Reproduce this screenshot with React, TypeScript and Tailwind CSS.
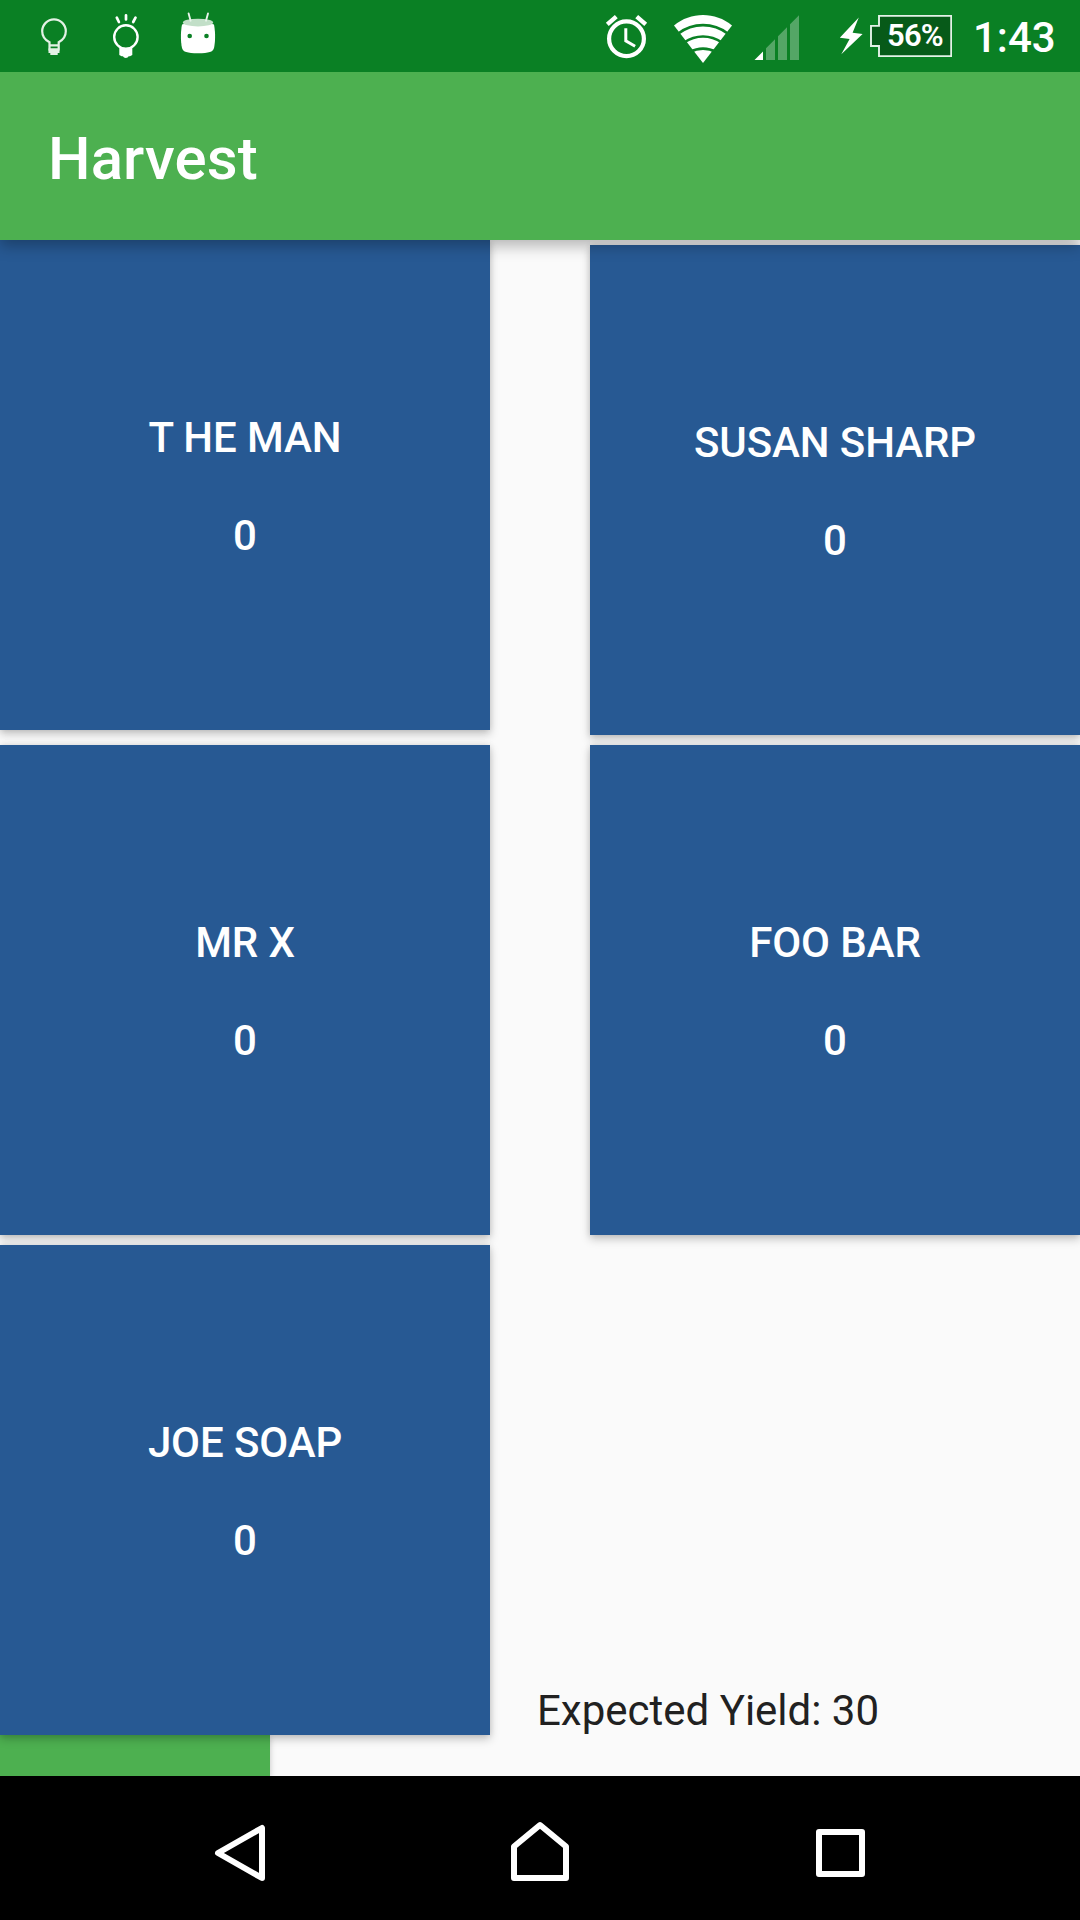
import React from "react";

function StatusBar() {
  return (
    <header className="relative z-20 flex h-[72px] shrink-0 bg-[#0a8024] text-white">
      <svg className="ml-[40px] h-[72px] w-[28px]" viewBox="40 0 28 72" fill="none" stroke="#e3f1e5" strokeWidth="2.2">
        <path d="M49.5 49.5V42.2C44.8 39.8 42.2 36 42.2 31.2a11.8 11.8 0 0 1 23.6 0c0 4.800-2.600 8.600-7.100 11v7.300M48.500 45.400h11M48.500 49.600h11" />
        <path d="M48.500 48.500h11V53h-1.800v2h-7.400v-2h-1.800z" fill="#e3f1e5" stroke="none" />
      </svg>
      <svg className="ml-[44px] h-[72px] w-[28px]" viewBox="112 0 28 72" fill="none" stroke="#fff" strokeWidth="2.400">
        <circle cx="125.900" cy="37" r="11.700" />
        <path d="M116.800 17.700l2.100 4.300M126 15.300v4.200M135.500 17.700l-2.300 4.300" strokeWidth="2.700" strokeLinecap="round" />
        <path d="M119.300 46.500q3.200 1.600 6.500 1.600t6.500-1.600V55l-2.300 1.200h-1.300q-.8 1.800-2.900 1.800t-2.900-1.800h-1.300L119.300 55z" fill="#fff" stroke="none" />
      </svg>
      <svg className="ml-[40px] h-[72px] w-[36px]" viewBox="180 0 36 72">
        <path d="M182 24.500c4-2 28-2 32 0 1.500 8 1.400 17 0 23.500-1 4-5 5.200-16 5.200s-15-1.200-16-5.200c-1.400-6.500-1.500-15.500 0-23.500z" fill="#fff" />
        <ellipse cx="198" cy="22.600" rx="15.200" ry="3.900" fill="#c2dfc8" />
        <path d="M188.600 13.500l2 7.200M208 13.500l-2 7.200" stroke="#e8f4ea" strokeWidth="1.900" strokeLinecap="round" />
        <circle cx="189.700" cy="36" r="2.300" fill="#0a8024" />
        <circle cx="206.500" cy="36" r="2.300" fill="#0a8024" />
      </svg>

      <svg className="ml-[388px] h-[72px] w-[46px]" viewBox="604 0 46 72" fill="none" stroke="#fff">
        <circle cx="626.500" cy="38.700" r="17.400" strokeWidth="4.200" />
        <path d="M607.300 24.300l9-7.700M645.700 24.300l-9-7.700" strokeWidth="4.400" />
        <path d="M625.800 28.300v12.600l9.300 5.300" strokeWidth="3" />
      </svg>
      <svg className="ml-[22px] h-[72px] w-[62px]" viewBox="672 0 62 72">
        <path d="M674 25.500C690.500 11.500 715.500 11.500 732 25.500L703 63z" fill="#fff" />
        <g fill="none" stroke="#0a8024" strokeWidth="2.600">
          <path d="M678 33.700C693 22.300 713 22.300 728 33.700" />
          <path d="M684 42.500C696 34.500 710 34.500 722 42.500" />
          <path d="M690 52C698 47.500 708 47.500 716 52" />
        </g>
      </svg>
      <svg className="ml-[20px] h-[72px] w-[46px]" viewBox="754 0 46 72">
        <path d="M754.500 60L763 51.500V60z" fill="#fff" />
        <path d="M766 60V48.300l9-9V60zM778 60V36.300l9-9V60zM790 60V24.300l9-9V60z" fill="#54a666" />
      </svg>
      <svg className="ml-[40px] h-[72px] w-[24px]" viewBox="840 0 24 72">
        <path d="M858.800 17.500L839.800 37.700l9.800 1.300L841.300 54.200 862.600 34l-10-1.200z" fill="#fff" />
      </svg>
      <div className="relative ml-[6px] h-[72px] w-[82px]">
        <svg className="h-[72px] w-[82px]" viewBox="870 0 82 72">
          <path d="M879 15.900h72.200v40.200H879V46h-8V25.900h8z" fill="#075a19" stroke="#e4f2e7" strokeWidth="1.900" />
        </svg>
        <span className="absolute left-[17px] top-[17px] text-[31px] font-semibold leading-[38px] tracking-[-0.8px]">56%</span>
      </div>
      <time className="ml-[21px] mt-[13px] text-[42px] font-medium leading-[50px]">1:43</time>
    </header>
  );
}

function Tile({ name, className = "" }: { name: string; className?: string }) {
  return (
    <button
      className={
        "flex h-[490px] w-[490px] shrink-0 flex-col items-center justify-center bg-[#275993] pt-[2px] text-[42px] font-medium leading-[49px] tracking-[-0.1px] text-white shadow-[0_4px_9px_rgba(0,0,0,0.22),0_0_6px_rgba(0,0,0,0.1)] " +
        className
      }
    >
      <span>{name}</span>
      <span className="mt-[49px]">0</span>
    </button>
  );
}

function NavBar() {
  return (
    <nav className="relative z-10 flex h-[144px] shrink-0 bg-black" aria-label="System">
      <svg className="ml-[210px] h-[144px] w-[60px]" viewBox="210 1776 60 144" fill="none" stroke="#fff" strokeWidth="6" strokeLinejoin="round">
        <path d="M262 1828v50L218 1853z" />
      </svg>
      <svg className="ml-[240px] h-[144px] w-[60px]" viewBox="510 1776 60 144" fill="none" stroke="#fff" strokeWidth="6" strokeLinejoin="round">
        <path d="M514 1878v-31.500L540 1825l26 21.500V1878z" />
      </svg>
      <svg className="ml-[240px] h-[144px] w-[60px]" viewBox="810 1776 60 144" fill="none" stroke="#fff" strokeWidth="6" strokeLinejoin="round">
        <path d="M819 1832h43v42h-43z" />
      </svg>
    </nav>
  );
}

export default function App() {
  return (
    <div className="flex h-[1920px] w-[1080px] flex-col overflow-hidden bg-[#fafafa] font-['Roboto',sans-serif]">
      <StatusBar />
      <div className="relative z-10 flex h-[168px] shrink-0 items-center bg-[#4db050] pl-[48px] shadow-[0_6px_14px_rgba(0,0,0,0.28)]">
        <h1 className="pt-[5px] text-[60px] font-medium leading-[70px] tracking-[0.1px] text-white">Harvest</h1>
      </div>
      <main className="relative flex h-[1536px] shrink-0 justify-between overflow-hidden">
        <section className="flex w-[490px] flex-col">
          <Tile name="T HE MAN" />
          <Tile name="MR X" className="mt-[15px]" />
          <Tile name="JOE SOAP" className="relative z-10 mt-[10px]" />
          <div className="h-[41px] w-[270px] bg-[#4db050] shadow-[0_2px_6px_rgba(0,0,0,0.22)]" />
        </section>
        <section className="flex w-[543px] flex-col items-end">
          <Tile name="SUSAN SHARP" className="mt-[5px]" />
          <Tile name="FOO BAR" className="mt-[10px]" />
          <p className="mb-[41px] mt-auto self-start text-[42px] leading-[49px] text-[#212121]">Expected Yield: 30</p>
        </section>
      </main>
      <NavBar />
    </div>
  );
}
